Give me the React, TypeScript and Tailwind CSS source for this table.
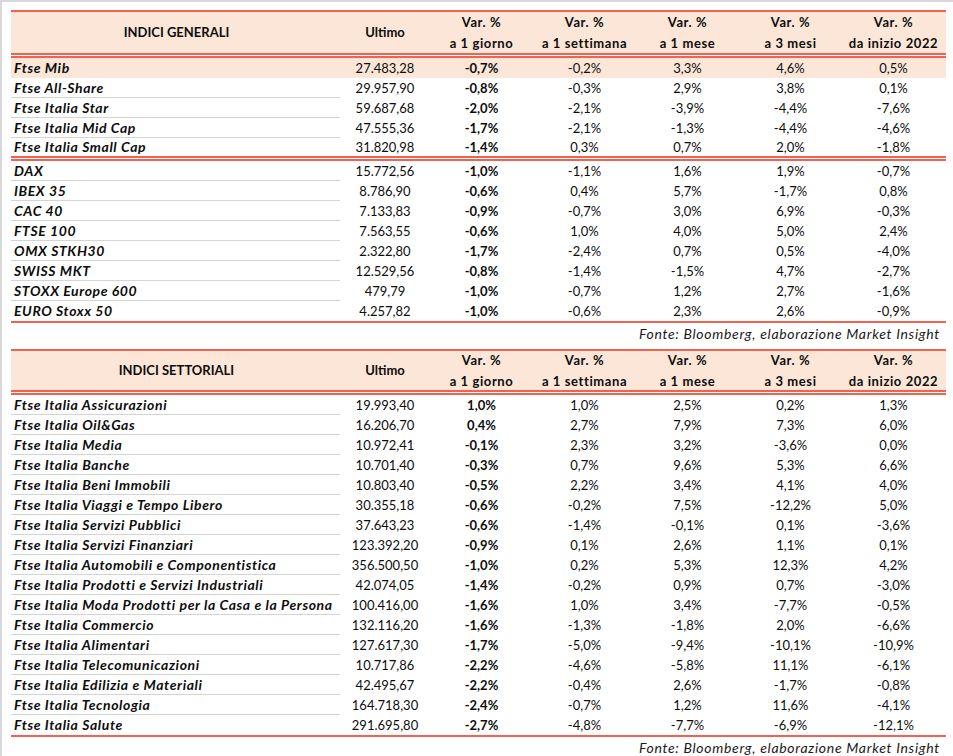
type Row = [string, string, string, string, string, string, string];

const generali: Row[] = [
  ["Ftse Mib", "27.483,28", "-0,7%", "-0,2%", "3,3%", "4,6%", "0,5%"],
  ["Ftse All-Share", "29.957,90", "-0,8%", "-0,3%", "2,9%", "3,8%", "0,1%"],
  ["Ftse Italia Star", "59.687,68", "-2,0%", "-2,1%", "-3,9%", "-4,4%", "-7,6%"],
  ["Ftse Italia Mid Cap", "47.555,36", "-1,7%", "-2,1%", "-1,3%", "-4,4%", "-4,6%"],
  ["Ftse Italia Small Cap", "31.820,98", "-1,4%", "0,3%", "0,7%", "2,0%", "-1,8%"],
];

const esteri: Row[] = [
  ["DAX", "15.772,56", "-1,0%", "-1,1%", "1,6%", "1,9%", "-0,7%"],
  ["IBEX 35", "8.786,90", "-0,6%", "0,4%", "5,7%", "-1,7%", "0,8%"],
  ["CAC 40", "7.133,83", "-0,9%", "-0,7%", "3,0%", "6,9%", "-0,3%"],
  ["FTSE 100", "7.563,55", "-0,6%", "1,0%", "4,0%", "5,0%", "2,4%"],
  ["OMX STKH30", "2.322,80", "-1,7%", "-2,4%", "0,7%", "0,5%", "-4,0%"],
  ["SWISS MKT", "12.529,56", "-0,8%", "-1,4%", "-1,5%", "4,7%", "-2,7%"],
  ["STOXX Europe 600", "479,79", "-1,0%", "-0,7%", "1,2%", "2,7%", "-1,6%"],
  ["EURO Stoxx 50", "4.257,82", "-1,0%", "-0,6%", "2,3%", "2,6%", "-0,9%"],
];

const settoriali: Row[] = [
  ["Ftse Italia Assicurazioni", "19.993,40", "1,0%", "1,0%", "2,5%", "0,2%", "1,3%"],
  ["Ftse Italia Oil&Gas", "16.206,70", "0,4%", "2,7%", "7,9%", "7,3%", "6,0%"],
  ["Ftse Italia Media", "10.972,41", "-0,1%", "2,3%", "3,2%", "-3,6%", "0,0%"],
  ["Ftse Italia Banche", "10.701,40", "-0,3%", "0,7%", "9,6%", "5,3%", "6,6%"],
  ["Ftse Italia Beni Immobili", "10.803,40", "-0,5%", "2,2%", "3,4%", "4,1%", "4,0%"],
  ["Ftse Italia Viaggi e Tempo Libero", "30.355,18", "-0,6%", "-0,2%", "7,5%", "-12,2%", "5,0%"],
  ["Ftse Italia Servizi Pubblici", "37.643,23", "-0,6%", "-1,4%", "-0,1%", "0,1%", "-3,6%"],
  ["Ftse Italia Servizi Finanziari", "123.392,20", "-0,9%", "0,1%", "2,6%", "1,1%", "0,1%"],
  ["Ftse Italia Automobili e Componentistica", "356.500,50", "-1,0%", "0,2%", "5,3%", "12,3%", "4,2%"],
  ["Ftse Italia Prodotti e Servizi Industriali", "42.074,05", "-1,4%", "-0,2%", "0,9%", "0,7%", "-3,0%"],
  ["Ftse Italia Moda Prodotti per la Casa e la Persona", "100.416,00", "-1,6%", "1,0%", "3,4%", "-7,7%", "-0,5%"],
  ["Ftse Italia Commercio", "132.116,20", "-1,6%", "-1,3%", "-1,8%", "2,0%", "-6,6%"],
  ["Ftse Italia Alimentari", "127.617,30", "-1,7%", "-5,0%", "-9,4%", "-10,1%", "-10,9%"],
  ["Ftse Italia Telecomunicazioni", "10.717,86", "-2,2%", "-4,6%", "-5,8%", "11,1%", "-6,1%"],
  ["Ftse Italia Edilizia e Materiali", "42.495,67", "-2,2%", "-0,4%", "2,6%", "-1,7%", "-0,8%"],
  ["Ftse Italia Tecnologia", "164.718,30", "-2,4%", "-0,7%", "1,2%", "11,6%", "-4,1%"],
  ["Ftse Italia Salute", "291.695,80", "-2,7%", "-4,8%", "-7,7%", "-6,9%", "-12,1%"],
];

const cols = "grid grid-cols-[329px_90px_repeat(5,103px)]";

function DoubleLine() {
  return <div className="h-[5px] border-y-2 border-[#ef6350] bg-white" />;
}

function Header({ title, h }: { title: string; h: string }) {
  const vars = ["a 1 giorno", "a 1 settimana", "a 1 mese", "a 3 mesi", "da inizio 2022"];
  return (
    <div className={`${cols} ${h} bg-[#fbe6d7] font-bold text-[13px]`}>
      <div className="flex items-center justify-center pl-[2px]">{title}</div>
      <div className="flex items-center justify-center">Ultimo</div>
      {vars.map((v) => (
        <div key={v} className="flex flex-col items-center justify-center gap-[5px] leading-4 tracking-[0.6px]">
          <span>Var. %</span>
          <span>{v}</span>
        </div>
      ))}
    </div>
  );
}

function DataRow({ r, last, hl, h = "h-[20px]" }: { r: Row; last?: boolean; hl?: boolean; h?: string }) {
  return (
    <div className={`${cols} ${h} text-[13px] leading-none ${hl ? "bg-[#fbe6d7]" : ""}`}>
      <div
        className={`flex items-center pl-[3px] text-[14px] font-bold italic tracking-[0.6px] ${
          last || hl ? "" : "border-b border-[#d4d4d4]"
        }`}
      >
        {r[0]}
      </div>
      <div className="flex items-center justify-center">{r[1]}</div>
      <div className="flex items-center justify-center font-bold">{r[2]}</div>
      <div className="flex items-center justify-center">{r[3]}</div>
      <div className="flex items-center justify-center">{r[4]}</div>
      <div className="flex items-center justify-center">{r[5]}</div>
      <div className="flex items-center justify-center">{r[6]}</div>
    </div>
  );
}

function Fonte() {
  return (
    <div className="h-[20px] flex items-center justify-end pr-[6px] italic text-[14px] tracking-[0.7px] text-[#1a1a1a]">
      Fonte: Bloomberg, elaborazione Market Insight
    </div>
  );
}

export default function App() {
  return (
    <div
      className="w-[953px] h-[756px] bg-white border-l-2 border-t-2 border-[#d9d9d9] pl-[9px] pt-[8px] overflow-hidden text-[#0d0d0d]"
      style={{ fontFamily: "Lato, 'Noto Sans', sans-serif" }}
    >
      <div className="w-[935px]">
        {/* Indici generali */}
        <div className="border-t-2 border-[#ef6350]">
          <Header title="INDICI GENERALI" h="h-[41px]" />
          <DoubleLine />
          {generali.map((r, i) => (
            <DataRow
              key={r[0]}
              r={r}
              hl={i === 0}
              last={i === generali.length - 1}
              h={i === generali.length - 1 ? "h-[18px]" : "h-[20px]"}
            />
          ))}
          <DoubleLine />
          {esteri.map((r, i) => (
            <DataRow key={r[0]} r={r} last={i === esteri.length - 1} />
          ))}
          <div className="h-[2px] bg-[#ef6350]" />
        </div>
        <Fonte />

        {/* Indici settoriali */}
        <div className="mt-[6px] border-t-2 border-[#ef6350]">
          <Header title="INDICI SETTORIALI" h="h-[39px]" />
          <DoubleLine />
          {settoriali.map((r, i) => (
            <DataRow key={r[0]} r={r} last={i === settoriali.length - 1} />
          ))}
          <div className="h-[2px] bg-[#ef6350]" />
        </div>
        <Fonte />
      </div>
    </div>
  );
}
